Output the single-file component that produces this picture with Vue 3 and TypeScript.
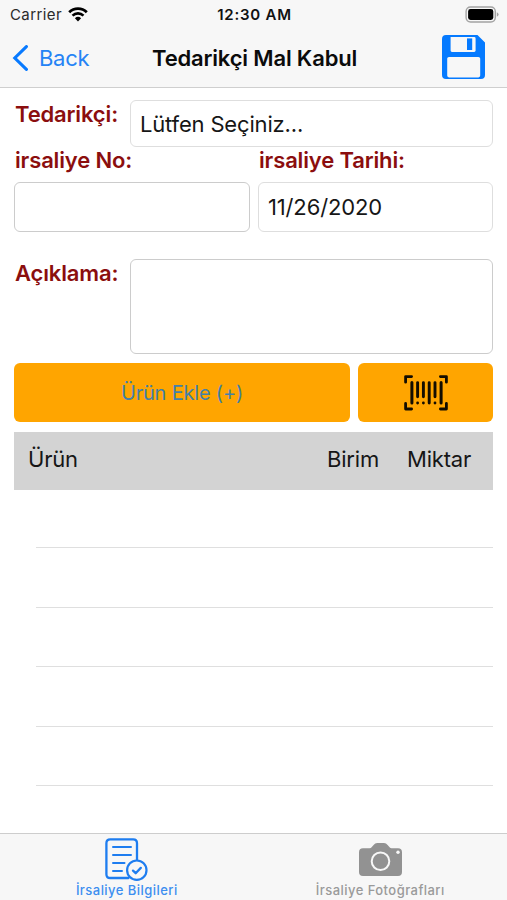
<script setup lang="ts">
import { ref } from 'vue'

const supplier = ref<string>('Lütfen Seçiniz...')
const deliveryNo = ref<string>('')
const deliveryDate = ref<string>('11/26/2020')
const note = ref<string>('')
const emptyRows: number[] = [1, 2, 3, 4, 5]
</script>

<template>
  <div class="screen">
    <header class="top">
      <div class="status">
        <div class="carrier">
          <span class="carrier-name">Carrier</span>
          <svg class="wifi" viewBox="0 0 20 15" width="20" height="15">
            <path d="M1.2 5.2A12.6 12.6 0 0 1 18.8 5.2" fill="none" stroke="#000" stroke-width="2.8" />
            <path d="M4.5 8.6A8 8 0 0 1 15.5 8.6" fill="none" stroke="#000" stroke-width="2.6" />
            <path d="M10 14.4L6.9 11.3A4.5 4.5 0 0 1 13.1 11.3Z" fill="#000" />
          </svg>
        </div>
        <span class="time">12:30 AM</span>
        <svg class="battery" viewBox="0 0 34 17" width="34" height="17">
          <rect x="1.1" y="1" width="29.2" height="15" rx="4.4" fill="none" stroke="#a3a3a3" stroke-width="1.4" />
          <rect x="3.1" y="3" width="25.2" height="11" rx="2.4" fill="#000" />
          <path d="M31.8 6.2Q33.6 7 33.6 8.5T31.8 10.8Z" fill="#a3a3a3" />
        </svg>
      </div>
      <nav class="nav">
        <button class="back">
          <svg viewBox="0 0 17 26" width="17" height="26">
            <path d="M14.4 1.6L2.8 13L14.4 24.4" fill="none" stroke="#087aff" stroke-width="3.1" stroke-linecap="round" stroke-linejoin="miter" />
          </svg>
          <span>Back</span>
        </button>
        <h1>Tedarikçi Mal Kabul</h1>
        <button class="save">
          <svg viewBox="0 0 43 44" width="43" height="44">
            <path fill-rule="evenodd" fill="#057aff" d="M4 0H35.5L43 7.5V40Q43 44 39 44H4Q0 44 0 40V4Q0 0 4 0ZM8.6 2V15.6Q8.6 17 10 17H32.2Q33.6 17 33.6 15.6V3.4Q33.6 2 32.2 2ZM5.2 23.6V40.6Q5.2 42.4 7 42.4H36.4Q38.2 42.4 38.2 40.6V23.6Q38.2 22 36.4 22H7Q5.2 22 5.2 23.6Z" />
            <rect x="25" y="3.4" width="5.2" height="11.6" fill="#057aff" />
          </svg>
        </button>
      </nav>
    </header>

    <main class="form">
      <div class="line supplier">
        <label class="label side">Tedarikçi:</label>
        <div class="field pick"><span class="t-supplier">{{ supplier }}</span></div>
      </div>
      <div class="pair">
        <div class="col">
          <label class="label">irsaliye No:</label>
          <div class="field strong">{{ deliveryNo }}</div>
        </div>
        <div class="col">
          <label class="label">irsaliye Tarihi:</label>
          <div class="field"><span class="t-date">{{ deliveryDate }}</span></div>
        </div>
      </div>
      <div class="line note">
        <label class="label side">Açıklama:</label>
        <div class="field strong area">{{ note }}</div>
      </div>
      <div class="actions">
        <button class="btn add"><span>Ürün Ekle (+)</span></button>
        <button class="btn scan">
          <svg viewBox="0 0 44 36" width="44" height="36" fill="none" stroke="#130d00" stroke-linecap="round">
            <path stroke-width="2.8" stroke-linejoin="round" d="M1.6 7.2V1.6H7.6M36.4 1.6H42.4V7.2M1.6 28.4V34H7.6M36.4 34H42.4V28.4" />
            <path stroke-width="3" d="M7.9 7.6V28M37.1 7.6V28" />
            <path stroke-width="2.9" d="M13.6 7.6V21.8M19.4 7.6V21.8M25.2 7.6V28M31 7.6V21.8" />
            <path stroke-width="2.8" d="M13.6 28V28.1M19.4 28V28.1M31 28V28.1" />
          </svg>
        </button>
      </div>
      <div class="thead">
        <span class="c-item">Ürün</span>
        <span class="c-unit">Birim</span>
        <span class="c-qty">Miktar</span>
      </div>
      <ul class="rows">
        <li v-for="row in emptyRows" :key="row"></li>
      </ul>
    </main>

    <footer class="tabs">
      <button class="tab active">
        <svg viewBox="0 0 43 44" width="43" height="44" fill="none" stroke="#1e7df0" stroke-linecap="round">
          <path stroke-width="2.3" d="M32 22V5.2Q32 1.4 28.2 1.4H5.2Q1.4 1.4 1.4 5.2V36.2Q1.4 40 5.2 40H23.5" />
          <path stroke-width="2" d="M8 9.1H26M8 17.1H26M8 25.1H19.5M8 33.1H17" />
          <circle cx="31.8" cy="32.2" r="9.7" stroke-width="2.2" />
          <path stroke-width="2.3" stroke-linejoin="round" d="M28 32.6L30.7 35.2L35.8 29.9" />
        </svg>
        <span>İrsaliye Bilgileri</span>
      </button>
      <button class="tab">
        <svg viewBox="0 0 43 44" width="43" height="44">
          <path fill="#929292" d="M4 10.3H10.6Q11.8 10.3 12.6 9.3L14.6 6.9Q16 5 18.2 5H25Q27.2 5 28.6 6.9L30.6 9.3Q31.4 10.3 32.6 10.3H39Q43 10.3 43 14.3V34Q43 38 39 38H4Q0 38 0 34V14.3Q0 10.3 4 10.3Z" />
          <circle cx="21.5" cy="23.3" r="8.8" fill="none" stroke="#f8f8f8" stroke-width="2" />
          <circle cx="39" cy="14.3" r="1.7" fill="#f8f8f8" />
        </svg>
        <span>İrsaliye Fotoğrafları</span>
      </button>
    </footer>
  </div>
</template>

<style>
body {
  background: #fff;
}
</style>

<style scoped>
.screen {
  display: flex;
  flex-direction: column;
  width: 507px;
  height: 900px;
  overflow: hidden;
  background: #fff;
  color: #161616;
  font-family: Inter, "Liberation Sans", sans-serif;
  font-size: 22px;
  white-space: nowrap;
}
.screen * {
  box-sizing: border-box;
}
button {
  padding: 0;
  border: 0;
  background: none;
  font: inherit;
}
svg {
  display: block;
  flex: none;
}
.top {
  height: 88px;
  background: #f7f7f7;
  border-bottom: 1px solid #cfcfcf;
}
.status {
  display: grid;
  grid-template-columns: 1fr auto 1fr;
  height: 28px;
  padding: 0 8px 0 10px;
  line-height: 30px;
}
.carrier {
  display: flex;
  gap: 6px;
  font-size: 15px;
  color: #2b2b2b;
}
.carrier-name {
  width: 52px;
  letter-spacing: 0.4px;
}
.wifi {
  margin-top: 7px;
}
.time {
  font-size: 15px;
  font-weight: 600;
  letter-spacing: 0.75px;
  color: #111;
}
.battery {
  justify-self: end;
  margin-top: 6px;
}
.nav {
  display: grid;
  grid-template-columns: 140px auto 1fr;
  align-items: center;
  height: 60px;
  padding: 0 22px 0 12px;
}
.back {
  display: flex;
  align-items: center;
  gap: 10px;
  color: #2583f5;
  letter-spacing: -0.3px;
}
h1 {
  margin: 0;
  font-size: 22px;
  font-weight: 600;
  letter-spacing: -0.17px;
  color: #0b0b0b;
}
.save {
  justify-self: end;
  margin-top: -2px;
}
.form {
  flex: 1;
  padding: 12px 14px 0;
}
.line {
  display: flex;
}
.label {
  padding-left: 1px;
  font-weight: 600;
  line-height: 28px;
  letter-spacing: -0.15px;
  color: #8b0e0e;
}
.side {
  width: 116px;
}
.field {
  flex: 1;
  height: 50px;
  padding-left: 9px;
  border: 1px solid #dedede;
  border-radius: 6px;
  line-height: 48px;
}
.strong {
  border-color: #cccccc;
}
.pick {
  height: 47px;
  line-height: 46px;
}
.t-supplier {
  letter-spacing: -0.17px;
}
.t-date {
  letter-spacing: -0.15px;
}
.pair {
  display: grid;
  grid-template-columns: 236px 235px;
  gap: 8px;
}
.col {
  display: flex;
  flex-direction: column;
}
.col .label {
  height: 35px;
  line-height: 27px;
}
.col .field {
  flex: none;
}
.note {
  margin-top: 27px;
}
.area {
  height: 95px;
}
.actions {
  display: grid;
  grid-template-columns: 336px 135px;
  gap: 8px;
  margin-top: 9px;
}
.btn {
  display: flex;
  align-items: center;
  justify-content: center;
  height: 59px;
  border-radius: 6px;
  background: #ffa500;
}
.add {
  color: #4480a8;
  font-size: 20px;
  letter-spacing: -0.2px;
}
.thead {
  display: flex;
  height: 58px;
  margin-top: 9.5px;
  margin-bottom: -0.5px;
  padding-left: 14px;
  background: #d3d3d3;
  line-height: 55px;
  letter-spacing: -0.2px;
}
.c-item {
  width: 299px;
}
.c-unit {
  width: 80px;
}
.rows {
  margin: 0;
  padding: 0 0 0 22px;
  list-style: none;
}
.rows li {
  height: 59.4px;
  border-bottom: 1px solid #dfdfdf;
}
.tabs {
  display: grid;
  grid-template-columns: 1fr 1fr;
  height: 67px;
  background: #f7f7f7;
  border-top: 1px solid #cdcdcd;
}
.tab {
  display: flex;
  flex-direction: column;
  align-items: center;
  padding-top: 4px;
  font-size: 13px;
  font-weight: 500;
  line-height: 16px;
  letter-spacing: 0.45px;
  color: #9a9a9a;
}
.active {
  color: #3c8ef0;
}
</style>
